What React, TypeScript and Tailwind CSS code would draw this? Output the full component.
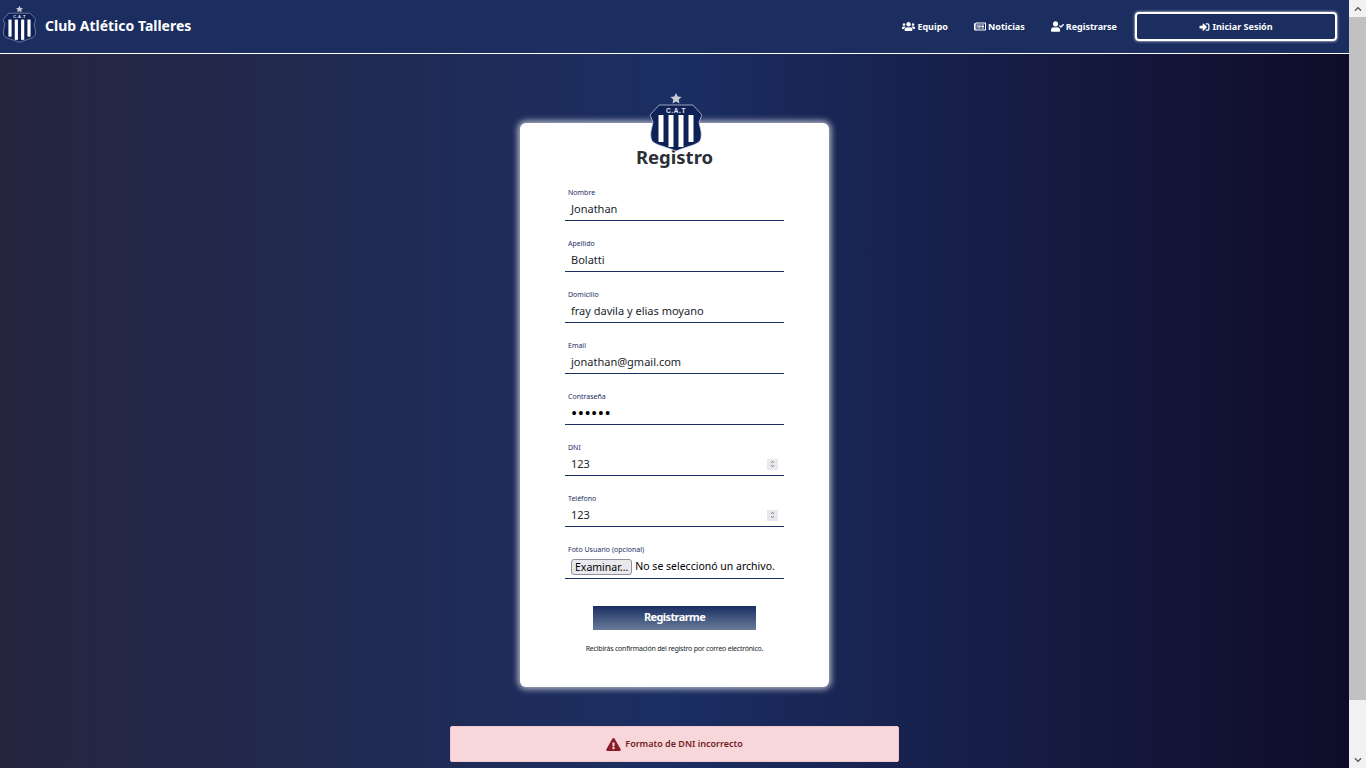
import React from "react";
import { FaUsers, FaRegNewspaper, FaUserCheck, FaSignInAlt, FaExclamationTriangle, FaChevronUp, FaChevronDown } from "react-icons/fa";

function Logo({ className }: { className: string }) {
  return (
    <svg viewBox="0 0 52 60" className={className}>
      <polygon points="26,1 27.7,4.6 31.6,5 28.7,7.6 29.5,11.4 26,9.5 22.5,11.4 23.3,7.6 20.4,5 24.3,4.6" fill="#c9ccd4" />
      <path d="M9 13 H43 L52 23 L49 30 C50 36 52 40 51 46 C50 53 40 53 26 59 C12 53 2 53 1 46 C0 40 2 36 3 30 L0 23 Z" fill="#0f2257" stroke="#d5d8e0" strokeWidth="0.7" />
      <rect x="8.5" y="23" width="5" height="27" fill="#fff" />
      <rect x="18.5" y="23" width="5" height="32" fill="#fff" />
      <rect x="28.5" y="23" width="5" height="32" fill="#fff" />
      <rect x="38.5" y="23" width="5" height="27" fill="#fff" />
      <text x="26" y="20.5" textAnchor="middle" fontSize="6.5" fontWeight="700" letterSpacing="0.6" fill="#e5e7ee" fontFamily="'Liberation Sans', sans-serif">C.A.T</text>
    </svg>
  );
}

function Spinner() {
  return (
    <div className="flex h-[11px] w-[11px] flex-col items-center justify-center bg-[#e9e9ed] text-[#777]">
      <FaChevronUp className="h-[4px] w-[5px]" />
      <FaChevronDown className="h-[4px] w-[5px]" />
    </div>
  );
}

function Field({ label, tall, children }: { label: string; tall?: boolean; children: React.ReactNode }) {
  return (
    <div className="w-[219px]">
      <div className="pl-[3px] text-[7px] leading-[10px] text-[#1b2e63]">{label}</div>
      <div className={`flex items-center border-b border-[#1b2e63] px-[6px] text-[11px] text-[#212529] ${tall ? "h-[24px]" : "h-[23px]"}`}>{children}</div>
    </div>
  );
}

export default function App() {
  return (
    <div className="flex h-screen overflow-hidden font-['Noto_Sans',sans-serif]">
      <div className="flex min-w-0 flex-1 flex-col bg-gradient-to-r from-[#25253f] via-[#1b2e63] to-[#0f0c29]">
        {/* Navbar */}
        <nav className="flex h-[54px] shrink-0 items-center border-b border-white bg-[#1b2e5f] pl-[3px] pr-[12px] text-white">
          <Logo className="mb-[6px] h-[38px] w-[33px]" />
          <span className="mb-[2px] ml-[9px] text-[14px] font-bold">Club Atlético Talleres</span>
          <div className="ml-auto flex items-center text-[9px] font-bold">
            <a className="flex items-center gap-[2px]"><FaUsers className="h-[11px] w-[13px]" /> Equipo</a>
            <a className="ml-[26px] flex items-center gap-[2px]"><FaRegNewspaper className="h-[11px] w-[12px]" /> Noticias</a>
            <a className="ml-[26px] flex items-center gap-[2px]"><FaUserCheck className="h-[11px] w-[13px]" /> Registrarse</a>
            <a className="ml-[18px] flex h-[29px] w-[202px] items-center justify-center gap-[2px] rounded-[4px] border-2 border-white shadow-[0_0_3px_#fff]">
              <FaSignInAlt className="h-[10px] w-[11px]" /> Iniciar Sesión
            </a>
          </div>
        </nav>

        {/* Registration form */}
        <main className="flex flex-col items-center pt-[69px]">
          <div className="relative flex h-[564px] w-[309px] flex-col items-center rounded-[6px] bg-white pt-[24px] shadow-[0_0_6px_2px_#ffffffb0]">
            <Logo className="absolute left-[130px] top-[-31px] h-[60px] w-[52px]" />
            <h1 className="text-[18.5px] font-bold leading-[20px] text-[#2b2f36]">Registro</h1>
            <form className="mt-[21px] flex flex-col items-center gap-[18px]">
              <Field label="Nombre">Jonathan</Field>
              <Field label="Apellido">Bolatti</Field>
              <Field label="Domicilio">fray davila y elias moyano</Field>
              <Field label="Email">jonathan@gmail.com</Field>
              <Field label="Contraseña"><span className="text-[16.5px] tracking-[0.5px] text-black">••••••</span></Field>
              <Field label="DNI"><span className="flex-1">123</span><Spinner /></Field>
              <Field label="Teléfono"><span className="flex-1">123</span><Spinner /></Field>
              <Field label="Foto Usuario (opcional)" tall>
                <span className="whitespace-nowrap rounded-[3px] border border-[#8f8f9d] bg-[#e9e9ed] px-[3px] text-[10.5px] leading-[14px] text-black">Examinar...</span>
                <span className="ml-[3px] whitespace-nowrap text-[10.5px] text-black">No se seleccionó un archivo.</span>
              </Field>
            </form>
            <button className="mt-[27px] h-[24px] w-[163px] bg-gradient-to-b from-[#1b2e63] to-[#6b7c99] pb-[2px] text-[11px] font-bold tracking-[-0.6px] text-white">Registrarme</button>
            <p className="mt-[14px] text-[7px] tracking-[-0.22px] text-[#212529]">Recibirás confirmación del registro por correo electrónico.</p>
          </div>

          <div className="mt-[39px] flex h-[36px] w-[449px] items-center justify-center gap-[4px] rounded-[2px] border border-[#f5c6cb] bg-[#f8d7da] text-[9px] font-semibold text-[#721c24]">
            <FaExclamationTriangle className="h-[13px] w-[15px] text-[#8a1c28]" /> Formato de DNI incorrecto
          </div>
        </main>
      </div>

      {/* Scrollbar */}
      <div className="flex w-[17px] shrink-0 flex-col bg-[#f1f1f1]">
        <div className="flex h-[17px] items-center justify-center text-[#505050]"><FaChevronUp className="h-[8px] w-[10px]" /></div>
        <div className="h-[683px] bg-[#c1c1c1]" />
        <div className="mt-auto flex h-[17px] items-center justify-center text-[#505050]"><FaChevronDown className="h-[8px] w-[10px]" /></div>
      </div>
    </div>
  );
}
